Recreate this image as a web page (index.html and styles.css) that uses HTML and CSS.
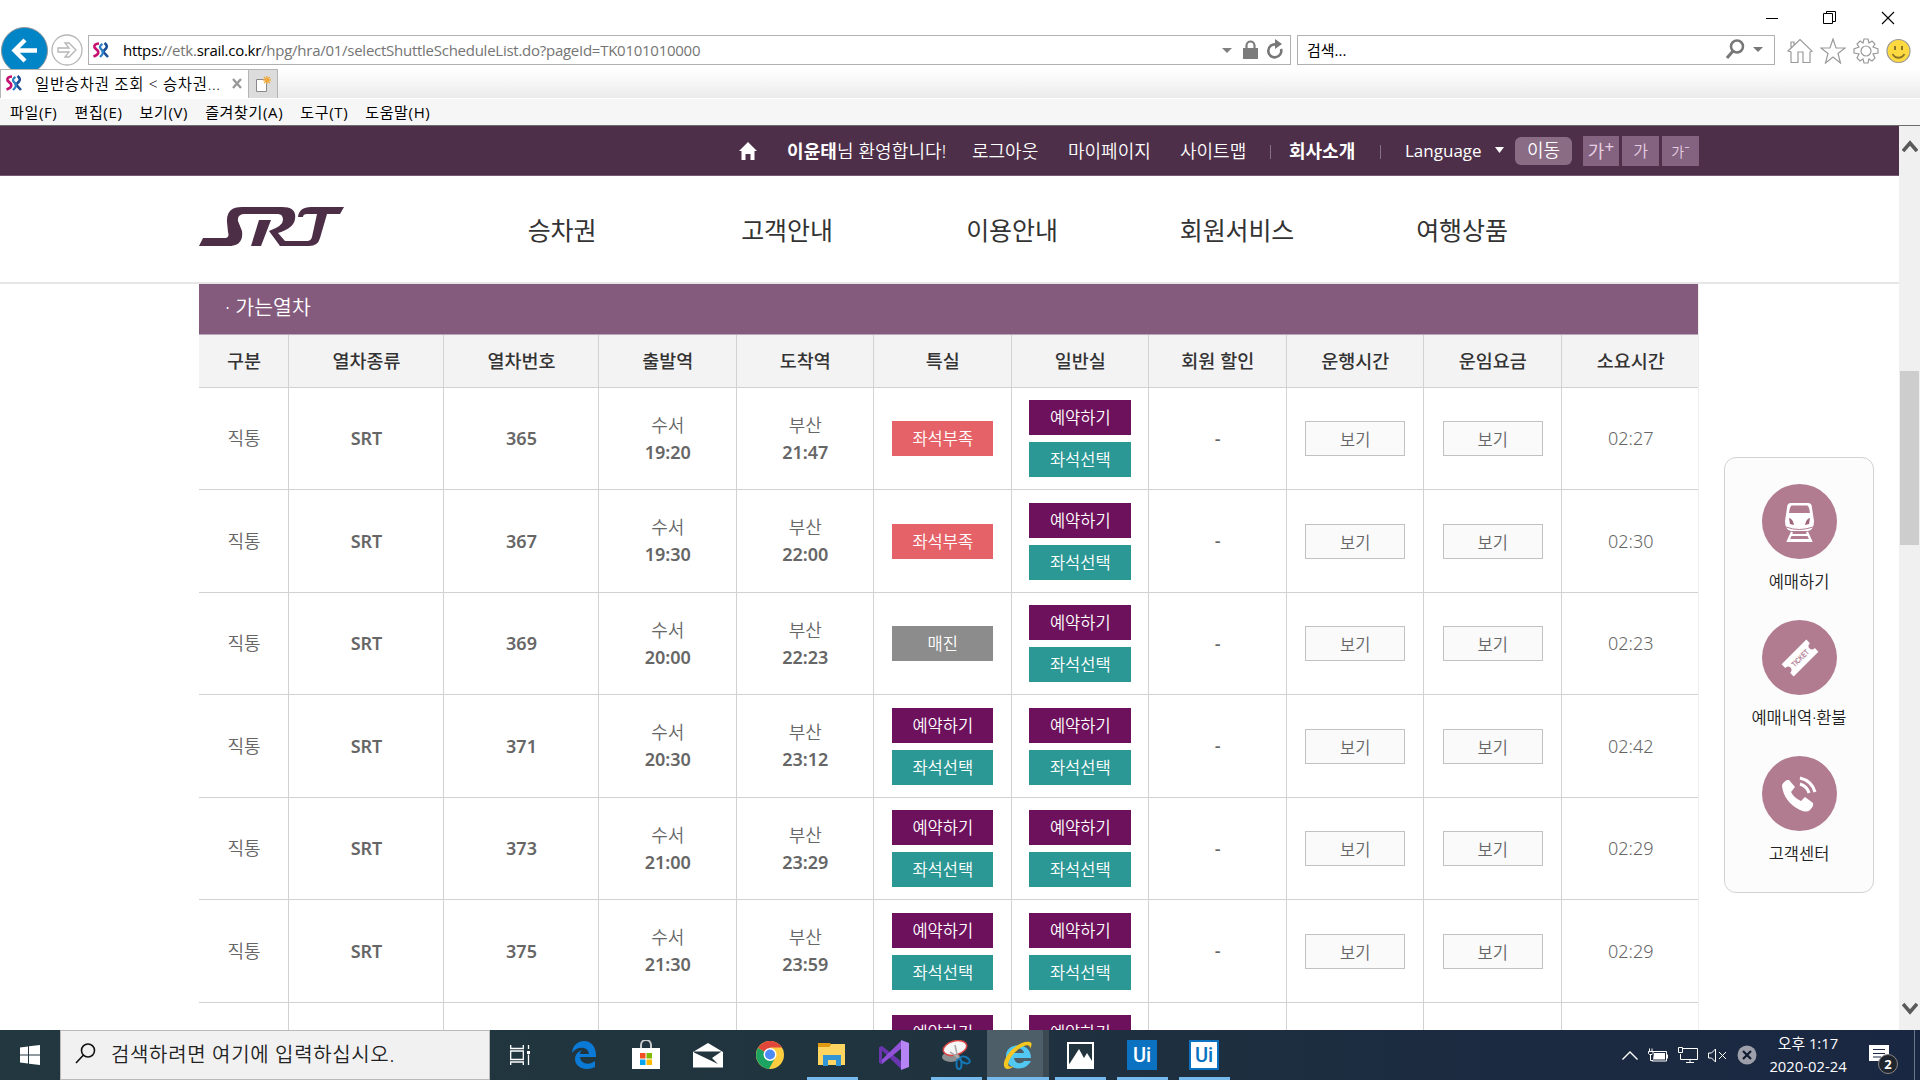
FILE: index.html
```html
<!DOCTYPE html>
<html lang="ko">
<head>
<meta charset="utf-8">
<title>일반승차권 조회</title>
<link rel="stylesheet" href="styles.css">
</head>
<body>
<svg class="defs" width="0" height="0">
  <defs>
    <symbol id="fav" viewBox="0 0 16 17">
      <path d="M6.500 1.500Q1 2 2 5.500L5.500 9Q7 12.500 1 14.500" fill="none" stroke="#c4106e" stroke-width="2.600"/>
      <path d="M12 1Q16 4 13 7L10.500 9.500 15.500 15" fill="none" stroke="#1c4d97" stroke-width="2.600"/>
      <path d="M10 2Q6.500 4 8 6.500L10.500 9Q11 12 7.500 15" fill="none" stroke="#2a7fc4" stroke-width="2.300"/>
    </symbol>
  </defs>
</svg>
<div class="screen">
  <header class="chrome">
    <div class="caption">
      <svg width="14" height="14" viewBox="0 0 14 14"><path d="M1 7.500h12" stroke="#000"/></svg>
      <svg width="14" height="14" viewBox="0 0 14 14" fill="#fff" stroke="#000"><path d="M3.500.5h9v10h-9z"/><path d="M.5 2.500h9v10h-9z"/></svg>
      <svg width="14" height="14" viewBox="0 0 14 14" stroke="#000" stroke-width="1.100"><path d="M1 1l12 12M13 1L1 13"/></svg>
    </div>
    <div class="navbar">
      <svg class="back" width="48" height="42" viewBox="0 0 48 42"><circle cx="24.500" cy="23.500" r="23" fill="#0285c6" stroke="#8b9298"/><path d="M37 23.500H15M25 13l-10.500 10.500L25 34" fill="none" stroke="#fff" stroke-width="4.300"/></svg>
      <svg class="forward" width="32" height="32" viewBox="0 0 32 32" fill="#fff" stroke="#b5b5b5" stroke-width="1.300"><circle cx="16" cy="16" r="15"/><path d="M7 14h11l-4-5h4l7 7-7 7h-4l4-5H7z"/></svg>
      <div class="address">
        <svg width="17" height="17"><use href="#fav"/></svg>
        <p class="url"><b>https:</b>//etk.<b>srail.co.kr</b>/hpg/hra/01/selectShuttleScheduleList.do?pageId=TK0101010000</p>
        <svg width="64" height="22" viewBox="0 0 64 22"><path d="M0 9h10l-5 5z" fill="#808080"/><path d="M21 9h15v11H21z" fill="#7c7c7c"/><path d="M24.500 10V6.500a4 4 0 0 1 8 0V10" fill="none" stroke="#7c7c7c" stroke-width="2.200"/><path d="M54 5.500a6.500 6.500 0 1 0 5 4.500" fill="none" stroke="#777" stroke-width="2.600"/><path d="M53 0l7 5-7 5z" fill="#777"/></svg>
      </div>
      <div class="find"><span>검색...</span><svg width="38" height="20" viewBox="0 0 38 20"><circle cx="12" cy="7.500" r="6" fill="none" stroke="#777" stroke-width="2.500"/><path d="M8 12l-6 7" stroke="#777" stroke-width="3"/><path d="M28 8h10l-5 5z" fill="#777"/></svg></div>
      <div class="tools">
        <svg width="26" height="26" viewBox="0 0 26 26"><path d="M1 13L13 1.500 25 13l-2 1v10.500h-7V14h-5v10.500H4V14zM4 10V4h3v3"/></svg>
        <svg width="26" height="26" viewBox="0 0 26 26"><path d="M13 1l3 9h9l-7 5.500 2.500 9.500-7.500-6-7.500 6L8 15.500 1 10h9z"/></svg>
        <svg width="26" height="26" viewBox="0 0 26 26"><path d="M11 1h4l1 4 3-2 3 3-2 3 5 2v4l-5 1 2 4-3 3-3-2-1 4h-4l-1-4-3 2-3-3 2-4-5-1v-4l5-2-2-3 3-3 3 2z"/><circle cx="13" cy="13" r="5"/></svg>
        <svg width="25" height="26" viewBox="0 0 25 26"><circle cx="12.500" cy="13" r="11.500" fill="#ffd940" stroke="#999"/><path d="M9 8v4M16 8v4" stroke="#8a762a" stroke-width="2"/><path d="M6.500 16c3 5 9 5 12 0" stroke="#8a762a" stroke-width="1.800" fill="none"/></svg>
      </div>
    </div>
    <div class="tabs">
      <div class="tab"><svg width="17" height="17"><use href="#fav"/></svg><span>일반승차권 조회 &lt; 승차권...</span><svg width="10" height="11" viewBox="0 0 10 11"><path d="M1 1l8 9M9 1L1 10" stroke="#999" stroke-width="2.400"/></svg></div>
      <div class="newtab"><svg width="16" height="17" viewBox="0 0 16 17"><path d="M1.500 3.500h10v12h-10z" fill="#fff" stroke="#888"/><path d="M12 0v8M8 4h8M9 1l6 6M15 1L9 7" stroke="#f2a93b" stroke-width="1.300"/></svg></div>
      <div class="tabfill"></div>
    </div>
    <nav class="menu"><span>파일(F)</span><span>편집(E)</span><span>보기(V)</span><span>즐겨찾기(A)</span><span>도구(T)</span><span>도움말(H)</span></nav>
  </header>

  <div class="viewport">
    <div class="page">
      <div class="util">
        <svg width="18" height="18" viewBox="0 0 18 18"><path d="M9 0l9 9h-2.500v9h-4v-6h-5v6h-4V9H0z" fill="#fff"/></svg>
        <span class="u1"><b>이윤태</b>님 환영합니다!</span><span class="u2">로그아웃</span><span class="u3">마이페이지</span><span class="u4">사이트맵</span><i class="bar"></i><b class="u5">회사소개</b><i class="bar bar2"></i><span class="lang">Language</span>
        <svg class="drop" width="9" height="6" viewBox="0 0 9 6"><path d="M0 0h9L4.500 6z" fill="#fff"/></svg>
        <span class="go">이동</span>
        <span class="sz big">가<sup>+</sup></span><span class="sz mid">가</span><span class="sz small">가<sup>-</sup></span>
      </div>
      <div class="gnb">
        <svg class="logo" width="146" height="42" viewBox="0 0 146 42"><g fill="#4d2e47"><path d="M0 40L4 32H25Q31 32 29 26L28 16Q27 1 43 1H83Q98 1 96 13Q95 22 79 27L86 35H108Q112 35 113 31L118 8H108Q104 8 104 11H99Q100 1 112 1H145L141 8H128L121 32Q119 40 110 40H81L70 25Q84 20 84 14Q84 8 79 8H46Q38 8 39 15L43 25Q45 40 29 40Z"/><path d="M60 14H72L62 40H52Z"/></g></svg>
        <nav><span>승차권</span><span>고객안내</span><span>이용안내</span><span>회원서비스</span><span>여행상품</span></nav>
      </div>
      <div class="body">
        <main class="trains">
          <h2>· 가는열차</h2>
          <div class="row head"><span>구분</span><span>열차종류</span><span>열차번호</span><span>출발역</span><span>도착역</span><span>특실</span><span>일반실</span><span>회원 할인</span><span>운행시간</span><span>운임요금</span><span>소요시간</span></div>
          <div class="row"><span>직통</span><b>SRT</b><b>365</b><span>수서<b>19:20</b></span><span>부산<b>21:47</b></span><span><a class="few">좌석부족</a></span><span><a class="book">예약하기</a><a class="seat">좌석선택</a></span><span class="dash">-</span><span><a class="view">보기</a></span><span><a class="view">보기</a></span><span class="dur">02:27</span></div>
          <div class="row"><span>직통</span><b>SRT</b><b>367</b><span>수서<b>19:30</b></span><span>부산<b>22:00</b></span><span><a class="few">좌석부족</a></span><span><a class="book">예약하기</a><a class="seat">좌석선택</a></span><span class="dash">-</span><span><a class="view">보기</a></span><span><a class="view">보기</a></span><span class="dur">02:30</span></div>
          <div class="row"><span>직통</span><b>SRT</b><b>369</b><span>수서<b>20:00</b></span><span>부산<b>22:23</b></span><span><a class="sold">매진</a></span><span><a class="book">예약하기</a><a class="seat">좌석선택</a></span><span class="dash">-</span><span><a class="view">보기</a></span><span><a class="view">보기</a></span><span class="dur">02:23</span></div>
          <div class="row"><span>직통</span><b>SRT</b><b>371</b><span>수서<b>20:30</b></span><span>부산<b>23:12</b></span><span><a class="book">예약하기</a><a class="seat">좌석선택</a></span><span><a class="book">예약하기</a><a class="seat">좌석선택</a></span><span class="dash">-</span><span><a class="view">보기</a></span><span><a class="view">보기</a></span><span class="dur">02:42</span></div>
          <div class="row"><span>직통</span><b>SRT</b><b>373</b><span>수서<b>21:00</b></span><span>부산<b>23:29</b></span><span><a class="book">예약하기</a><a class="seat">좌석선택</a></span><span><a class="book">예약하기</a><a class="seat">좌석선택</a></span><span class="dash">-</span><span><a class="view">보기</a></span><span><a class="view">보기</a></span><span class="dur">02:29</span></div>
          <div class="row"><span>직통</span><b>SRT</b><b>375</b><span>수서<b>21:30</b></span><span>부산<b>23:59</b></span><span><a class="book">예약하기</a><a class="seat">좌석선택</a></span><span><a class="book">예약하기</a><a class="seat">좌석선택</a></span><span class="dash">-</span><span><a class="view">보기</a></span><span><a class="view">보기</a></span><span class="dur">02:29</span></div>
          <div class="row"><span></span><b></b><b></b><span></span><span></span><span><a class="book">예약하기</a><a class="seat"></a></span><span><a class="book">예약하기</a><a class="seat"></a></span><span></span><span></span><span></span><span></span></div>
        </main>
        <aside class="quick">
          <svg width="75" height="75" viewBox="0 0 75 75"><circle cx="37.500" cy="37.500" r="37.500" fill="#b17c90"/><path d="M29 19h17q4 0 4 5l2 13q0 9-6 10H29q-6-1-6-10l2-13q0-5 4-5z" fill="#fff"/><path d="M30 21.500h15q2 0 3 7.500H27q1-7.500 3-7.500z" fill="#b17c90"/><path d="M27 34q4 1 5 7l-4-1zM48 34q-4 1-5 7l4-1z" fill="#9d647b"/><path d="M24 43q13 5 27 0" fill="none" stroke="#b17c90"/><path d="M30 48l-4 9h23l-4-9M29 51h17M27 56h21" fill="none" stroke="#fff" stroke-width="2.200"/></svg>
          <span>예매하기</span>
          <svg width="75" height="75" viewBox="0 0 75 75"><circle cx="37.500" cy="37.500" r="37.500" fill="#b17c90"/><g transform="rotate(-45 38 38)"><path d="M20.500 29.500h35v5q-4 0-4 3.500t4 3.500v5h-35v-5q4 0 4-3.500t-4-3.500z" fill="#fff"/><text x="38" y="41" text-anchor="middle" textLength="21" lengthAdjust="spacingAndGlyphs" class="tk">TICKET</text></g></svg>
          <span>예매내역·환불</span>
          <svg width="75" height="75" viewBox="0 0 75 75"><circle cx="37.500" cy="37.500" r="37.500" fill="#b17c90"/><path d="M20 30q0-3 5-6l2 0 6 7-4 5q3 6 10 9l4-4 8 6q1 3-3 7-3 3-10 0-16-8-18-24z" fill="#fff"/><path d="M38 28q7 2 9 9M38 22q12 3 15 14" fill="none" stroke="#fff" stroke-width="3"/></svg>
          <span>고객센터</span>
        </aside>
      </div>
    </div>
    <div class="scroll">
      <svg width="16" height="13" viewBox="0 0 16 13"><path d="M1 11l7-8 7 8" fill="none" stroke="#5a5a5a" stroke-width="3.600"/></svg>
      <i></i>
      <svg class="down" width="16" height="13" viewBox="0 0 16 13"><path d="M1 2l7 8 7-8" fill="none" stroke="#5a5a5a" stroke-width="3.600"/></svg>
    </div>
  </div>

  <footer class="taskbar">
    <div class="start"><svg width="20" height="20" viewBox="0 0 20 20" fill="#fff"><path d="M0 2.500L8 1.400V9.500H0zM9 1.300L20 0v9.500H9zM0 10.500h8v8.100L0 17.500zM9 10.500h11V20L9 18.700z"/></svg></div>
    <div class="search"><svg width="21" height="21" viewBox="0 0 21 21" fill="none" stroke="#111" stroke-width="1.600"><circle cx="13" cy="7.500" r="6.500"/><path d="M8.500 12L1 20"/></svg><span>검색하려면 여기에 입력하십시오.</span></div>
    <div class="apps">
      <div class="app"><svg width="20" height="20" viewBox="0 0 20 20" fill="none" stroke="#fff" stroke-width="1.300"><path d="M.7 0v3.500h12.600V0M.7 6h12.600v8.500H.7zM.7 20v-3h12.600v3M18.500 0v4M18.500 9.500V20"/><path d="M17 6h3v3h-3z" fill="#fff" stroke="none"/></svg></div>
      <div class="app"><svg width="26" height="28" viewBox="0 0 26 28"><path d="M1 12C2-4 26-5 25 16H9c1 8 10 8 15 4v6C14 31 4 26 4 18c0-5 4-8 7-9-2 2-2 3-2 4h9C17 5 6 5 1 12z" fill="#0b7ad6"/></svg></div>
      <div class="app"><svg class="store" width="30" height="30" viewBox="0 0 30 30"><path d="M10 9V5a5 5 0 0 1 10 0v4" fill="none" stroke="#ccc" stroke-width="2"/><path d="M1 8h28v21H1z" fill="#fff"/><path d="M9 13h5.500v5.500H9z" fill="#f25022"/><path d="M15.500 13H21v5.500h-5.500z" fill="#7fba00"/><path d="M9 19.500h5.500V25H9z" fill="#00a4ef"/><path d="M15.500 19.500H21V25h-5.500z" fill="#ffb900"/></svg></div>
      <div class="app"><svg width="30" height="25" viewBox="0 0 30 25"><path d="M0 9L15 0l15 9v15.500H0z" fill="#fff"/><path d="M1 8.500h27.500L19 15l6 6L1 9.500z" fill="#22353f"/></svg></div>
      <div class="app"><svg width="28" height="28" viewBox="0 0 28 28"><circle cx="14" cy="14" r="14" fill="#ffcd40"/><path d="M14 14L2 7a14 14 0 0 1 24-.5H14z" fill="#e0463a"/><path d="M2 7a14 14 0 0 0 11 21l6-11-5-3z" fill="#1da462"/><circle cx="14" cy="13.500" r="6.500" fill="#fff"/><circle cx="14" cy="13.500" r="5" fill="#4c8bf5"/></svg></div>
      <div class="app open"><svg width="28" height="24" viewBox="0 0 28 24"><path d="M0 1h27v21H0z" fill="#ffd562"/><path d="M0 0h12l1 2-2 2H0z" fill="#e09a10"/><path d="M5 23V12h18v11h-5v-6h-8v6z" fill="#3295d6"/></svg></div>
      <div class="app"><svg width="30" height="30" viewBox="0 0 30 30"><path d="M0 7.500L3 6l20 16-1 7z" fill="#6a36b0"/><path d="M0 22.500L3 24 23 8l-1-7z" fill="#9152d8"/><path d="M0 7.500L3 6v18l-3-1.500z" fill="#6a36b0"/><path d="M22 0l8 3v24l-8 3z" fill="#b684f5"/></svg></div>
      <div class="app open"><svg width="29" height="30" viewBox="0 0 29 30"><ellipse cx="9" cy="17" rx="9" ry="5" fill="#8d9092"/><ellipse cx="13" cy="8" rx="12" ry="7" transform="rotate(-15 13 8)" fill="#f7f7f7" stroke="#d94444" stroke-width="1.500"/><path d="M13 5l3 14M8 12l9 6" stroke="#aaa" stroke-width="1.600"/><g fill="none" stroke="#1478b8" stroke-width="2"><ellipse cx="17" cy="24" rx="2.500" ry="5"/><ellipse cx="23" cy="20" rx="5" ry="3" transform="rotate(25 23 20)"/></g></svg></div>
      <div class="app open active"><svg width="30" height="30" viewBox="0 0 30 30"><path d="M3 16C3 2 28 1 28 18H11c1 7 8 6 10 3h7C22 33 3 30 3 16zm8-3h10c-1-6-9-6-10 0z" fill="#50c8f2"/><path d="M2 28C-4 20 15-1 27 2c3 1 1 5 0 7 1-9-16 0-21 12-2 5 0 7 5 5-3 3-7 4-9 2z" fill="#f6c620"/></svg></div>
      <div class="app open"><svg width="27" height="27" viewBox="0 0 27 27"><path d="M0 0h27v27H0z" fill="#fff"/><path d="M2 2h23v17l-5-8-3 5-5-9-9 14-1 1z" fill="#22353f"/></svg></div>
      <div class="app open"><b class="ui">Ui</b></div>
      <div class="app open"><b class="ui inv">Ui</b></div>
    </div>
    <div class="tray">
      <svg width="16" height="9" viewBox="0 0 16 9"><path d="M.5 8.500L8 1l7.500 7.500" fill="none" stroke="#fff" stroke-width="1.400"/></svg>
      <svg width="20" height="14" viewBox="0 0 20 14"><path d="M4.500 3.500H18.500v9.500H4" fill="none" stroke="#fff"/><path d="M6 5h11v6.500H5z" fill="#fff"/><path d="M19.500 6.500v4M2.500 7v5.500H5M1.500.5v3M4 .5v3M.5 3.500h4.500v2l-1 1H1.500l-1-1z" fill="none" stroke="#fff"/></svg>
      <svg width="20" height="17" viewBox="0 0 20 17" fill="none" stroke="#fff"><path d="M5 1.500h14.500v11H2.500V7M.5.5h4v5h-4zM8 15.500h8M12 12.500v3"/></svg>
      <svg width="19" height="15" viewBox="0 0 19 15" fill="none" stroke="#fff"><path d="M.5 5h3L7.500 1v13l-4-4h-3zM11 4l7 7M18 4l-7 7"/></svg>
      <svg width="20" height="20" viewBox="0 0 20 20"><circle cx="10" cy="10" r="9.500" fill="#9da0aa"/><path d="M6 6l8 8M14 6l-8 8" stroke="#111b30" stroke-width="2.200"/></svg>
    </div>
    <div class="clock"><span>오후 1:17</span><span>2020-02-24</span></div>
    <div class="note"><svg width="20" height="20" viewBox="0 0 20 20"><path d="M0 0h20v16h-5l-3 4-2-4H0z" fill="#fff"/><path d="M4 4.500h12M4 8.500h12M4 12h8" stroke="#1b2943"/></svg><b>2</b></div>
    <i class="peek"></i>
  </footer>
</div>
</body>
</html>
```
FILE: styles.css
```css
*{box-sizing:border-box}
body{margin:0;background:#fff;overflow:hidden;font-family:"Noto Sans","Noto Sans CJK KR",sans-serif}
svg{display:block;flex:none}
i{font-style:normal}
.defs{position:absolute}
.screen{width:1920px;height:1080px;display:flex;flex-direction:column;overflow:hidden}
.screen span,.screen b,.screen a,.screen p{white-space:nowrap}

.chrome{height:126px;flex:none;display:flex;flex-direction:column;border-bottom:1px solid #6b6b6b;font-family:"Open Sans","Noto Sans CJK KR",sans-serif}
.caption{height:27px;display:flex;justify-content:flex-end;gap:44px;padding:11px 25px 0 0}
.navbar{height:42px;display:flex;align-items:flex-start}
.forward{margin:7px 0 0 3px}
.address{margin:8px 0 0 5px;width:1203px;height:30px;border:1px solid #b1b1b1;display:flex;align-items:center;padding:0 4px 0 3px}
.url{margin:0 0 0 14px;flex:1;font-size:15px;line-height:28px;color:#757575;letter-spacing:-.26px}
.url b{font-weight:400;color:#000}
.find{margin:8px 0 0 6px;width:478px;height:30px;border:1px solid #b1b1b1;display:flex;align-items:center;justify-content:space-between;padding:0 11px 2px 9px;font-size:15px}
.tools{display:flex;gap:7px;margin:11px 0 0 12px;fill:none;stroke:#9a9a9a;stroke-width:1.200}
.tabs{height:29px;display:flex;align-items:stretch}
.tab{width:249px;border:1px solid #b4b4b4;border-bottom:0;display:flex;align-items:center;padding:0 6px 2px 4px;font-size:15.500px;font-weight:350}
.tab span{flex:1;margin-left:13px;letter-spacing:.65px}
.newtab{width:29px;background:#dcdcdc;border:1px solid #b4b4b4;border-width:1px 1px 0 0;display:grid;place-items:center}
.tabfill{flex:1;background:linear-gradient(#fff,#ebebeb)}
.menu{flex:1;margin-top:1px;background:#f6f6f6;display:flex;align-items:center;gap:17px;padding:0 0 2px 10px;font-size:15px;font-weight:400;letter-spacing:.65px}

.viewport{flex:1;min-height:0;display:flex;overflow:hidden}
.page{width:1899px;height:904px;overflow:hidden}
.util{height:50px;background:#4e2f49;border-bottom:1px solid #735a6f;color:#fff;display:flex;align-items:center;padding:0 0 1px 739px;font-size:18px;font-weight:350}
.util b{font-weight:600}
.util>svg:first-child{margin-top:2px}
.u1{width:159px;margin-left:30px;letter-spacing:.1px}.u2{width:66px;margin-left:26px}.u3{width:82px;margin-left:30px}.u4{width:66px;margin-left:30px}
.bar{width:1px;height:14px;background:#86708a;margin:4px 18px 0 24px}
.bar2{margin:4px 24px 0 24px}
.u5{width:67px}
.lang{width:79px;font-size:17px;font-family:"Open Sans",sans-serif;font-weight:400}
.drop{margin-left:11px}
.go{margin:2px 0 0 11px;width:57px;height:28px;border-radius:6px;background:#8a6c84;text-align:center;line-height:27px;font-size:18px}
.sz{height:30px;background:#846380;color:#e6cfe2;width:37px;text-align:center;line-height:31px;margin:2px 0 0 3px}
.sz.big{margin-left:11px;width:36px;font-size:18px;font-weight:400}
.sz.mid{font-size:16px}
.sz.small{font-size:14px}
.sz sup{font-size:17px;line-height:0;vertical-align:5px}
.gnb{height:108px;border-bottom:2px solid #e6e6e6;display:flex;align-items:flex-start}
.logo{margin:30px 0 0 199px}
.gnb nav{margin-left:104.5px;display:grid;grid-template-columns:repeat(5,225px);text-align:center;font-size:25px;line-height:36px;padding-top:36px;color:#333;letter-spacing:-.1px}
.body{display:flex;align-items:flex-start;padding-left:199px}
.trains{width:1500px;flex:none;border-right:1px solid #eee}
.trains h2{margin:0;height:51px;background:#845b7c;color:#fff;font-size:20.500px;font-weight:350;line-height:47px;padding-left:26px;border-bottom:1px solid #b9a6b6}
.row{height:102.5px;display:grid;grid-template-columns:90px 155px 155px repeat(8,137.5px);border-bottom:1px solid #d2d2d2;color:#666;font-size:18px;font-weight:350}
.row>*{display:flex;flex-direction:column;align-items:center;justify-content:center;border-right:1px solid #d2d2d2;line-height:27px;gap:7px;padding:1px 0 0 1px}
.row>*:last-child{border-right:0}
.row b{font-weight:600;font-size:18px}
.row span>b{margin-top:-7px}
.row.head{height:52.500px;background:#f3f3f3;color:#333;font-weight:500;font-size:18.500px}
.row.head>*{padding-top:0}
.row a{width:102px;height:35px;color:#fff;font-size:16.500px;line-height:35px;text-align:center}
.row>:nth-child(6) a{width:101px}
.row .few{background:#e56269}
.row .sold{background:#8c8c8c}
.row .book{background:#6e115d}
.row .seat{background:#2b9896}
.row .view{background:#fafafa;border:1px solid #c2c2c2;color:#666;width:100px;line-height:36px}
.row .dash{font-weight:500;padding-bottom:1px}
.quick{margin:173px 0 0 25px;width:150px;height:436px;border:1px solid #d2d2d2;border-radius:12px;background:#fcfcfc;display:flex;flex-direction:column;align-items:center;padding-top:26px;font-size:16.500px;font-weight:350;color:#222}
.quick span{height:61px;line-height:46px}
.tk{font:700 8px "Liberation Sans",sans-serif;fill:#b17c90}
.scroll{width:21px;background:#f0f0f0;display:flex;flex-direction:column;align-items:center;padding:14px 0 15px}
.scroll i{width:19px;height:174px;margin-top:218px;background:#cdcdcd}
.scroll .down{margin-top:auto}

.taskbar{height:50px;flex:none;display:flex;background:linear-gradient(90deg,#22373f,#20343f 45%,#1c2b40 75%,#1a2742);color:#fff}
.start{width:60px;display:grid;place-items:center}
.search{width:430px;background:#f1f1f1;border:1px solid #b9b9b9;display:flex;align-items:center;padding:0 0 3px 14px;color:#222;font-size:20px;font-weight:350;letter-spacing:.65px;gap:15px}
.apps{display:flex}
.app{width:62px;display:grid;place-items:center}
.app:first-child{width:63px;padding-right:3px}
.store{margin-right:1px}
.open{background:linear-gradient(#76b9ed,#76b9ed) bottom/51px 3px no-repeat}
.open.active{background:linear-gradient(#76b9ed,#76b9ed) bottom/100% 3px no-repeat,linear-gradient(90deg,#4d5e68 56px,#3a4952 56px)}
.ui{width:30px;height:30px;background:#0a72c0;color:#fff;font:500 20px/30px Roboto,sans-serif;text-align:center}
.ui.inv{background:#fff;color:#0a72c0;border:2px solid #0a72c0;line-height:27px}
.tray{margin-left:auto;display:flex;align-items:center;gap:10px}
.clock{width:130px;margin:0 -4px 0 -14px;display:flex;flex-direction:column;text-align:center;font-family:"Open Sans","Noto Sans CJK KR",sans-serif;font-size:14.800px;line-height:23px;padding-top:2px}
.note{position:relative;width:45px;padding-top:15px}
.note b{position:absolute;left:9px;top:24px;width:20px;height:20px;border-radius:50%;background:#20262e;border:1px solid #888;font-size:13px;line-height:18px;text-align:center}
.peek{width:6px;border-left:1px solid #6c7686}
```
